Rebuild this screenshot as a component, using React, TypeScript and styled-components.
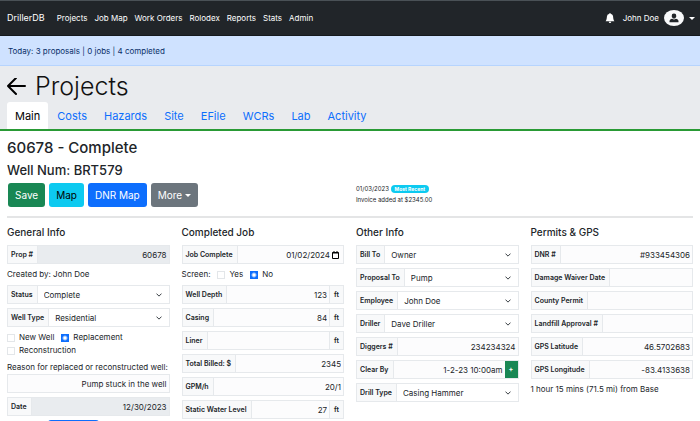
import React, { useId } from 'react';
import styled, { createGlobalStyle, css } from 'styled-components';

const GlobalStyle = createGlobalStyle`
  *, *::before, *::after { box-sizing: border-box; }
  html { scrollbar-width: none; }
  body {
    margin: 0;
    background: #fff;
    color: #212529;
    font-family: Inter, "Liberation Sans", sans-serif;
    font-size: 8px;
    line-height: 12px;
  }
  button, input, select { font: inherit; color: inherit; margin: 0; }
`;

const Navbar = styled.nav`
  display: flex;
  align-items: center;
  height: 36px;
  padding: 0 5px 0 7px;
  background: #212529;
  border-top: 1px solid #4a5156;
  border-bottom: 1px solid #15191d;
  color: #fff;
`;

const Brand = styled.a`
  margin-right: 12px;
  color: #fff;
  font-size: 9px;
  text-decoration: none;
`;

const NavLinks = styled.div`
  display: flex;
  flex: 1;
  gap: 7px;
`;

const NavLink = styled.a`
  color: #fff;
  font-size: 8px;
  text-decoration: none;
  white-space: nowrap;
`;

const IconButton = styled.button`
  display: flex;
  padding: 0;
  border: 0;
  background: none;
`;

const UserMenu = styled.button`
  display: flex;
  align-items: center;
  gap: 5px;
  margin-left: 8px;
  padding: 0;
  border: 0;
  background: none;
  color: #fff;
  font-size: 8px;
`;

const Avatar = styled.span`
  display: flex;
  align-items: center;
  justify-content: center;
  width: 20px;
  height: 16px;
  border-radius: 50%;
  background: #f8f9fa;
  color: #212529;
`;

const Caret = styled.span`
  display: inline-block;
  border: 3px solid transparent;
  border-top-color: currentColor;
  border-bottom: 0;
  vertical-align: middle;
`;

const TodayBar = styled.div`
  padding: 9px 8px 8px;
  background: #cfe2ff;
  border-bottom: 1px solid #b6d4fe;
  color: #0a3069;
`;

const PageHeader = styled.header`
  padding: 5px 7px 0;
  background: #e9ebee;
  border-bottom: 2px solid #299a35;
`;

const TitleRow = styled.div`
  display: flex;
  align-items: center;
  gap: 9px;
  height: 31px;
`;

const PageTitle = styled.h1`
  margin: 0;
  color: #111;
  font-size: 25px;
  font-weight: 300;
  line-height: 31px;
`;

const Tabs = styled.nav`
  display: flex;
  gap: 1px;
`;

const Tab = styled.a<{ $active?: boolean }>`
  padding: 6px 8px 5px;
  border-radius: 3px 3px 0 0;
  background: ${p => (p.$active ? '#fff' : 'transparent')};
  color: ${p => (p.$active ? '#000' : '#0d6efd')};
  font-size: 11px;
  line-height: 16px;
  text-decoration: none;
`;

const Main = styled.main`
  padding: 0 7px;
`;

const Heading = styled.h2`
  margin: 0;
  padding-top: 7px;
  font-size: 15px;
  font-weight: 500;
  line-height: 20px;
`;

const SubHeading = styled.h3`
  margin: 0;
  padding-top: 4px;
  font-size: 13px;
  font-weight: 500;
  line-height: 16px;
`;

const columns = css`
  display: grid;
  grid-template-columns: repeat(4, minmax(0, 1fr));
  column-gap: 12px;
`;

const ActionRow = styled.div`
  ${columns}
  padding-top: 5px;
`;

const Actions = styled.div`
  display: flex;
  grid-column: span 2;
  gap: 4px;
  padding-left: 1px;
`;

const Button = styled.button<{ $bg: string; $fg?: string }>`
  display: flex;
  align-items: center;
  gap: 3px;
  height: 24px;
  padding: 0 7px;
  border: 0;
  border-radius: 3px;
  background: ${p => p.$bg};
  color: ${p => p.$fg ?? '#fff'};
  font-size: 10px;
  white-space: nowrap;
`;

const Activity = styled.div`
  grid-column: span 2;
  font-size: 6px;
  line-height: 11px;
`;

const Pill = styled.span`
  display: inline-block;
  padding: 0 4px;
  border-radius: 4px;
  background: #0dcaf0;
  color: #fff;
  font-weight: 700;
  font-size: 5px;
  line-height: 8px;
`;

const Divider = styled.hr`
  margin: 9px 0 0;
  border: 0;
  border-top: 2px solid #e4e5e6;
`;

const Columns = styled.div`
  ${columns}
  padding-top: 7px;
`;

const Column = styled.section`
  display: flex;
  flex-direction: column;
  gap: 4px;
`;

const SectionTitle = styled.h4`
  margin: 0 0 2px;
  font-size: 10px;
  font-weight: 500;
  line-height: 14px;
`;

const Note = styled.p`
  margin: 0;
  line-height: 13px;
  white-space: nowrap;
`;

const Group = styled.div`
  display: flex;
  height: 19px;
  border: 1px solid #e6e9ec;
  background: #fcfcfd;
`;

const GroupLabel = styled.label`
  display: flex;
  align-items: center;
  padding: 0 4px 0 3px;
  border-right: 1px solid #e6e9ec;
  background: #f8f9fa;
  font-size: 7px;
  font-weight: 600;
  white-space: nowrap;
`;

const Unit = styled.span`
  display: flex;
  align-items: center;
  padding: 0 4px;
  border-left: 1px solid #e6e9ec;
  background: #f8f9fa;
  font-size: 7px;
  font-weight: 600;
`;

const TextInput = styled.input`
  flex: 1;
  min-width: 0;
  width: 100%;
  padding: 0 2px;
  border: 0;
  outline: 0;
  background: transparent;
  text-align: right;
  &:read-only { background: #e9ecef; }
`;

const SelectWrap = styled.div`
  display: flex;
  flex: 1;
  align-items: center;
  min-width: 0;
  padding-right: 7px;
  background: #fff;
`;

const Select = styled.select`
  flex: 1;
  min-width: 0;
  height: 17px;
  padding: 0 6px;
  border: 0;
  outline: 0;
  appearance: none;
  background: transparent;
`;

const CalendarButton = styled(IconButton)`
  align-items: center;
  padding-right: 4px;
`;

const AddButton = styled.button`
  width: 13px;
  padding: 0;
  border: 0;
  background: #198754;
  color: #fff;
  font-size: 7px;
  font-weight: 700;
`;

const Choices = styled.div`
  display: flex;
  flex-wrap: wrap;
  column-gap: 7px;
  line-height: 13px;
`;

const ChoiceLabel = styled.label`
  display: flex;
  align-items: center;
  gap: 4px;
`;

const Radio = styled.input`
  appearance: none;
  width: 8px;
  height: 8px;
  border: 1px solid #e3e6e9;
  background: #fff;
  &:checked {
    border: 0;
    background: radial-gradient(circle, #fff 0 1px, #0d6efd 3px);
  }
`;

const ReasonLabel = styled.label`
  display: block;
  line-height: 13px;
  white-space: nowrap;
`;

const FooterButton = styled.button`
  align-self: flex-start;
  width: 51px;
  height: 19px;
  margin-left: 41px;
  border: 0;
  border-radius: 3px;
  background: #0d6efd;
`;

function Chevron() {
  return (
    <svg width="6" height="6" viewBox="0 0 16 16" fill="none" stroke="#343a40" strokeWidth="2.6" strokeLinecap="round" strokeLinejoin="round">
      <path d="m2 5 6 6 6-6" />
    </svg>
  );
}

type FieldProps = {
  label: string;
  value?: string;
  unit?: string;
  readOnly?: boolean;
  children?: React.ReactNode;
};

function Field({ label, value = '', unit, readOnly, children }: FieldProps) {
  const id = useId();
  return (
    <Group>
      <GroupLabel htmlFor={id}>{label}</GroupLabel>
      <TextInput id={id} defaultValue={value} readOnly={readOnly} />
      {unit && <Unit>{unit}</Unit>}
      {children}
    </Group>
  );
}

function SelectField({ label, value }: { label: string; value: string }) {
  const id = useId();
  return (
    <Group>
      <GroupLabel htmlFor={id}>{label}</GroupLabel>
      <SelectWrap>
        <Select id={id} defaultValue={value}>
          <option>{value}</option>
        </Select>
        <Chevron />
      </SelectWrap>
    </Group>
  );
}

function Choice({ name, label, checked }: { name: string; label: string; checked?: boolean }) {
  return (
    <ChoiceLabel>
      <Radio type="radio" name={name} defaultChecked={checked} />
      {label}
    </ChoiceLabel>
  );
}

const navItems = ['Projects', 'Job Map', 'Work Orders', 'Rolodex', 'Reports', 'Stats', 'Admin'];
const tabs = ['Main', 'Costs', 'Hazards', 'Site', 'EFile', 'WCRs', 'Lab', 'Activity'];

export default function App() {
  return (
    <>
      <GlobalStyle />
      <Navbar>
        <Brand href="#">DrillerDB</Brand>
        <NavLinks>
          {navItems.map(item => <NavLink key={item} href="#">{item}</NavLink>)}
        </NavLinks>
        <IconButton aria-label="Notifications">
          <svg width="10" height="10" viewBox="0 0 16 16" fill="#fff">
            <path d="M8 16a2 2 0 0 0 2-2H6a2 2 0 0 0 2 2m.995-14.901a1 1 0 1 0-1.99 0A5 5 0 0 0 3 6c0 1.098-.5 6-2 7h14c-1.5-1-2-5.902-2-7 0-2.42-1.72-4.44-4.005-4.901" />
          </svg>
        </IconButton>
        <UserMenu>
          John Doe
          <Avatar>
            <svg width="10" height="10" viewBox="0 0 20 20" fill="currentColor">
              <path d="M10 1a4.6 4.6 0 0 0-4.6 4.8c0 2.900 2 5.200 4.600 5.200s4.600-2.300 4.600-5.200A4.600 4.600 0 0 0 10 1" />
              <path d="M1 18.500v-2c0-2.600 2.500-4.500 5.500-5 1 .8 2.200 1.300 3.500 1.300s2.500-.5 3.500-1.300c3 .5 5.500 2.400 5.500 5v2z" />
            </svg>
          </Avatar>
          <Caret />
        </UserMenu>
      </Navbar>

      <TodayBar>Today: 3 proposals | 0 jobs | 4 completed</TodayBar>

      <PageHeader>
        <TitleRow>
          <IconButton aria-label="Back">
            <svg width="19" height="18" viewBox="0 0 19 18" fill="none" stroke="#000" strokeWidth="2" strokeLinecap="round" strokeLinejoin="round">
              <path d="M18 8H1M9 0 1 8l8 8" />
            </svg>
          </IconButton>
          <PageTitle>Projects</PageTitle>
        </TitleRow>
        <Tabs>
          {tabs.map((tab, i) => <Tab key={tab} href="#" $active={i === 0}>{tab}</Tab>)}
        </Tabs>
      </PageHeader>

      <Main>
        <Heading>60678 - Complete</Heading>
        <SubHeading>Well Num: BRT579</SubHeading>
        <ActionRow>
          <Actions>
            <Button $bg="#198754">Save</Button>
            <Button $bg="#0dcaf0" $fg="#000">Map</Button>
            <Button $bg="#0d6efd">DNR Map</Button>
            <Button $bg="#6c757d">More<Caret /></Button>
          </Actions>
          <Activity>
            <div>01/03/2023 <Pill>Most Recent</Pill></div>
            <div>Invoice added at $2345.00</div>
          </Activity>
        </ActionRow>
        <Divider />

        <Columns>
          <Column>
            <SectionTitle>General Info</SectionTitle>
            <Field label="Prop #" value="60678" readOnly />
            <Note>Created by: John Doe</Note>
            <SelectField label="Status" value="Complete" />
            <SelectField label="Well Type" value="Residential" />
            <Choices>
              <Choice name="kind" label="New Well" />
              <Choice name="kind" label="Replacement" checked />
              <Choice name="kind" label="Reconstruction" />
            </Choices>
            <div>
              <ReasonLabel htmlFor="reason">Reason for replaced or reconstructed well:</ReasonLabel>
              <Group><TextInput id="reason" defaultValue="Pump stuck in the well" /></Group>
            </div>
            <Field label="Date" value="12/30/2023" readOnly />
            <FooterButton />
          </Column>

          <Column>
            <SectionTitle>Completed Job</SectionTitle>
            <Field label="Job Complete" value="01/02/2024">
              <CalendarButton aria-label="Choose date">
                <svg width="7" height="8" viewBox="0 0 14 16" fill="none" stroke="#000" strokeWidth="2">
                  <path d="M1 3h12v12H1zM1 4h12M4 0v3M10 0v3" />
                </svg>
              </CalendarButton>
            </Field>
            <Choices>
              Screen:
              <Choice name="screen" label="Yes" />
              <Choice name="screen" label="No" checked />
            </Choices>
            <Field label="Well Depth" value="123" unit="ft" />
            <Field label="Casing" value="84" unit="ft" />
            <Field label="Liner" unit="ft" />
            <Field label="Total Billed: $" value="2345" />
            <Field label="GPM/h" value="20/1" />
            <Field label="Static Water Level" value="27" unit="ft" />
          </Column>

          <Column>
            <SectionTitle>Other Info</SectionTitle>
            <SelectField label="Bill To" value="Owner" />
            <SelectField label="Proposal To" value="Pump" />
            <SelectField label="Employee" value="John Doe" />
            <SelectField label="Driller" value="Dave Driller" />
            <Field label="Diggers #" value="234234324" />
            <Field label="Clear By" value="1-2-23 10:00am">
              <AddButton aria-label="Add">+</AddButton>
            </Field>
            <SelectField label="Drill Type" value="Casing Hammer" />
          </Column>

          <Column>
            <SectionTitle>Permits &amp; GPS</SectionTitle>
            <Field label="DNR #" value="#933454306" />
            <Field label="Damage Waiver Date" />
            <Field label="County Permit" />
            <Field label="Landfill Approval #" />
            <Field label="GPS Latitude" value="46.5702683" />
            <Field label="GPS Longitude" value="-83.4133638" />
            <Note>1 hour 15 mins (71.5 mi) from Base</Note>
          </Column>
        </Columns>
      </Main>
    </>
  );
}
